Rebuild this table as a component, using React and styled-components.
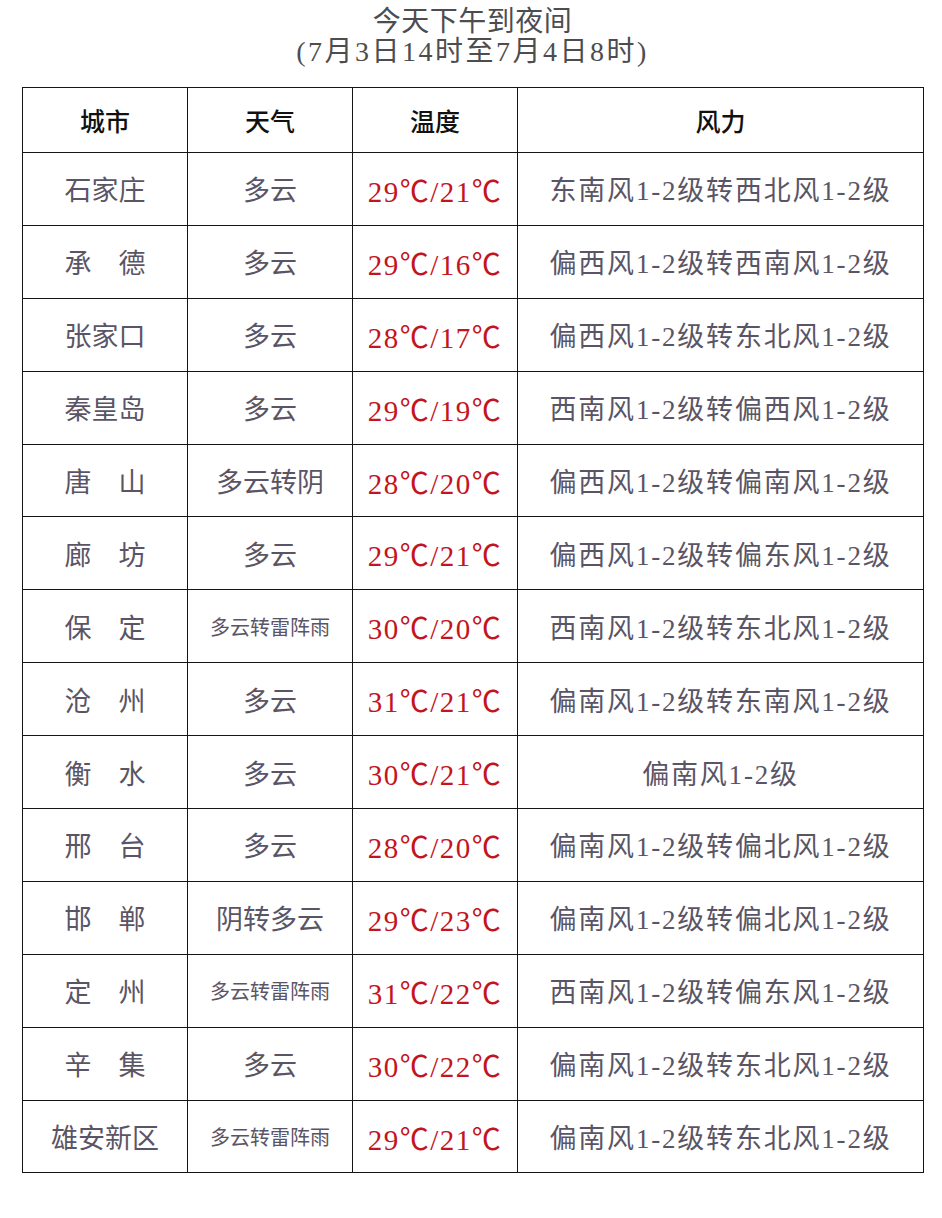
import React from "react";
import styled, { createGlobalStyle } from "styled-components";

const Global = createGlobalStyle`
  html, body { margin: 0; padding: 0; background: #fff; }
  body { font-family: "Liberation Serif", "Noto Sans CJK SC", serif; }
`;

const Page = styled.div`
  width: 942px;
  height: 1218px;
  background: #fff;
  display: flex;
  flex-direction: column;
  align-items: flex-start;
`;

const Title = styled.div`
  width: 901px;
  margin-left: 22px;
  height: 87px;
  display: flex;
  flex-direction: column;
  align-items: center;
  justify-content: flex-start;
  padding-top: 7px;
  box-sizing: border-box;
  color: #4d4d4f;
  font-size: 28px;
  line-height: 30px;
`;

const TitleLine = styled.div`
  letter-spacing: ${(p) => p.$ls}px;
`;

const Table = styled.table`
  margin-left: 22px;
  width: 901px;
  border-collapse: collapse;
  table-layout: fixed;
`;

const Col = styled.col`
  width: ${(p) => p.$w}px;
`;

const HeadCell = styled.th`
  height: 64px;
  border: 1.5px solid #151515;
  font-weight: 500;
  font-size: 25px;
  color: #111;
  text-align: center;
  padding: 0;
`;

const Cell = styled.td`
  height: 71.9px;
  border: 1.5px solid #151515;
  text-align: center;
  padding: 0;
  white-space: nowrap;
  font-size: ${(p) => p.$fs || 27}px;
  color: ${(p) => (p.$red ? "#c4141d" : "#5a5566")};
  letter-spacing: ${(p) => p.$ls || 0}px;
`;

const rows = [
  ["石家庄", "多云", "29℃/21℃", "东南风1-2级转西北风1-2级"],
  ["承　德", "多云", "29℃/16℃", "偏西风1-2级转西南风1-2级"],
  ["张家口", "多云", "28℃/17℃", "偏西风1-2级转东北风1-2级"],
  ["秦皇岛", "多云", "29℃/19℃", "西南风1-2级转偏西风1-2级"],
  ["唐　山", "多云转阴", "28℃/20℃", "偏西风1-2级转偏南风1-2级"],
  ["廊　坊", "多云", "29℃/21℃", "偏西风1-2级转偏东风1-2级"],
  ["保　定", "多云转雷阵雨", "30℃/20℃", "西南风1-2级转东北风1-2级"],
  ["沧　州", "多云", "31℃/21℃", "偏南风1-2级转东南风1-2级"],
  ["衡　水", "多云", "30℃/21℃", "偏南风1-2级"],
  ["邢　台", "多云", "28℃/20℃", "偏南风1-2级转偏北风1-2级"],
  ["邯　郸", "阴转多云", "29℃/23℃", "偏南风1-2级转偏北风1-2级"],
  ["定　州", "多云转雷阵雨", "31℃/22℃", "西南风1-2级转偏东风1-2级"],
  ["辛　集", "多云", "30℃/22℃", "偏南风1-2级转东北风1-2级"],
  ["雄安新区", "多云转雷阵雨", "29℃/21℃", "偏南风1-2级转东北风1-2级"],
];

export default function App() {
  return (
    <Page>
      <Global />
      <Title>
        <TitleLine $ls={0.5}>今天下午到夜间</TitleLine>
        <TitleLine $ls={2.5}>(7月3日14时至7月4日8时)</TitleLine>
      </Title>
      <Table>
        <colgroup>
          <Col $w={165} />
          <Col $w={165} />
          <Col $w={165} />
          <Col $w={406} />
        </colgroup>
        <thead>
          <tr>
            <HeadCell>城市</HeadCell>
            <HeadCell>天气</HeadCell>
            <HeadCell>温度</HeadCell>
            <HeadCell>风力</HeadCell>
          </tr>
        </thead>
        <tbody>
          {rows.map((r) => (
            <tr key={r[0]}>
              <Cell>{r[0]}</Cell>
              <Cell $fs={r[1].length > 4 ? 20 : 27}>{r[1]}</Cell>
              <Cell $red $fs={29} $ls={1.5}>{r[2]}</Cell>
              <Cell $ls={1.8}>{r[3]}</Cell>
            </tr>
          ))}
        </tbody>
      </Table>
    </Page>
  );
}
